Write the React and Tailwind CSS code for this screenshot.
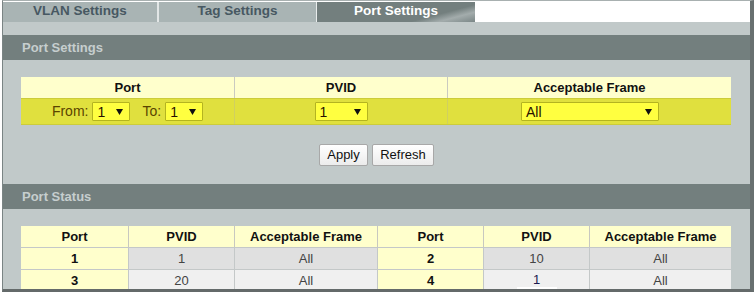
import React from "react";

function Arrow() {
  return (
    <svg width="7" height="7" viewBox="0 0 7 7" className="shrink-0">
      <polygon points="0,1 7,1 3.5,7" fill="#111" />
    </svg>
  );
}

function Sel({ cls, text }) {
  return (
    <div className={cls}>
      <span className="leading-none">{text}</span>
      <Arrow />
    </div>
  );
}

const selBase =
  "flex items-center justify-between h-[19px] border border-[#b4b420] bg-[#ffff40] pl-[4px] pr-[6px] text-[14px] text-[#2a1200] rounded-[1px]";

function SectionHeader({ title }) {
  return (
    <div className="h-[25px] bg-[#737f7e] flex items-center pl-[19px] text-[13px] font-bold text-[#c6cece]">
      {title}
    </div>
  );
}

export default function App() {
  const status = [
    [1, "1", "All", 2, "10", "All"],
    [3, "20", "All", 4, "1", "All"],
  ];
  return (
    <div className="w-[754px] h-[292px] bg-white pl-[2px] font-['Liberation_Sans',Arial,sans-serif]">
      <div className="h-full border-l border-t border-l-[#7a8484] border-t-[#a8b0b0] border-r-[4px] border-r-[#687070] border-b-[3px] border-b-[#646a6a] overflow-hidden flex flex-col">
        {/* tabs */}
        <div className="h-[21px] pt-[1px] bg-white flex">
          <div className="w-[154px] h-[20px] bg-[#a9b4b4] flex items-center justify-center pb-[2px] text-[13.5px] font-bold text-[#475862]">
            VLAN Settings
          </div>
          <div className="w-[2px] bg-[#e2e6e6]" />
          <div className="w-[157px] h-[20px] bg-[#a9b4b4] flex items-center justify-center pb-[2px] text-[13.5px] font-bold text-[#475862]">
            Tag Settings
          </div>
          <div className="w-[1px] bg-[#e8ecec]" />
          <div className="w-[158px] h-[20px] bg-[linear-gradient(165deg,#737f7e_0%,#737f7e_72%,#a3acac_84%,#7a8686_100%)] flex items-center justify-center pb-[2px] text-[13.5px] font-bold text-white">
            Port Settings
          </div>
          <div className="flex-1 bg-white" />
        </div>

        <div className="flex-1 bg-[#c1c9c9] flex flex-col">
          <div className="h-[13px]" />
          <SectionHeader title="Port Settings" />

          {/* settings table */}
          <div className="ml-[18px] mt-[17px] w-[710px] text-[13px]">
            <div className="grid grid-cols-[213px_213px_284px] h-[21px] bg-[#ffffcc] font-bold text-[#111]">
              <div className="flex items-center justify-center">Port</div>
              <div className="flex items-center justify-center border-l border-[#cacac0]">PVID</div>
              <div className="flex items-center justify-center border-l border-[#cacac0]">Acceptable Frame</div>
            </div>
            <div className="grid grid-cols-[213px_213px_284px] h-[27px] bg-[#e0e03e] border-t border-b border-[#cccc3a]">
              <div className="flex items-center justify-center gap-[4px] text-[14px] text-[#5a4400]">
                <span>From:</span>
                <Sel cls={selBase + " w-[38px]"} text="1" />
                <span className="ml-[8px]">To:</span>
                <Sel cls={selBase + " w-[38px]"} text="1" />
              </div>
              <div className="flex items-center justify-center border-l border-[#d0d060]">
                <Sel cls={selBase + " w-[53px]"} text="1" />
              </div>
              <div className="flex items-center justify-center border-l border-[#d0d060]">
                <Sel cls={selBase + " w-[138px] ml-[1px]"} text="All" />
              </div>
            </div>
          </div>

          {/* buttons */}
          <div className="mt-[19px] flex justify-center gap-[4px] text-[13px]">
            <button className="h-[22px] w-[49px] border border-[#a8a8a8] rounded-[2px] bg-gradient-to-b from-white to-[#ececec] text-[#111]">
              Apply
            </button>
            <button className="h-[22px] w-[62px] border border-[#a8a8a8] rounded-[2px] bg-gradient-to-b from-white to-[#ececec] text-[#111]">
              Refresh
            </button>
          </div>

          <div className="h-[18px]" />
          <SectionHeader title="Port Status" />

          {/* status table */}
          <div className="ml-[18px] mt-[17px] w-[710px] text-[13px]">
            <div className="grid grid-cols-[107px_106px_143px_106px_106px_142px] h-[21px] bg-[#ffffcc] font-bold text-[#111]">
              {["Port", "PVID", "Acceptable Frame", "Port", "PVID", "Acceptable Frame"].map((h, i) => (
                <div
                  key={i}
                  className={
                    i === 0
                      ? "flex items-center justify-center"
                      : "flex items-center justify-center border-l border-[#c8c8c0]"
                  }
                >
                  {h}
                </div>
              ))}
            </div>
            {status.map((r, ri) => (
              <div
                key={ri}
                className={
                  ri === 0
                    ? "grid grid-cols-[107px_106px_143px_106px_106px_142px] h-[22px] bg-[#e0e0e0] border-t border-[#c4c8c8]"
                    : "grid grid-cols-[107px_106px_143px_106px_106px_142px] h-[22px] bg-[#f0f0f0] border-t border-[#c4c8c8]"
                }
              >
                <div className="flex items-center justify-center bg-[#ffffcc] font-bold text-[#111]">{r[0]}</div>
                <div className="flex items-center justify-center border-l border-[#c4c8c8] text-[#444]">{r[1]}</div>
                <div className="flex items-center justify-center border-l border-[#c4c8c8] text-[#444]">{r[2]}</div>
                <div className="flex items-center justify-center border-l border-[#c4c8c8] bg-[#ffffcc] font-bold text-[#111]">{r[3]}</div>
                {ri === 1 ? (
                  <div className="flex flex-col items-center justify-end pb-[2px] border-l border-[#c4c8c8] text-[#1a1a50]">
                    <span className="leading-none mb-[1px]">{r[4]}</span>
                    <div className="w-[40px] h-[2px] bg-white" />
                  </div>
                ) : (
                  <div className="flex items-center justify-center border-l border-[#c4c8c8] text-[#444]">{r[4]}</div>
                )}
                <div className="flex items-center justify-center border-l border-[#c4c8c8] text-[#444]">{r[5]}</div>
              </div>
            ))}
          </div>
        </div>
      </div>
    </div>
  );
}
